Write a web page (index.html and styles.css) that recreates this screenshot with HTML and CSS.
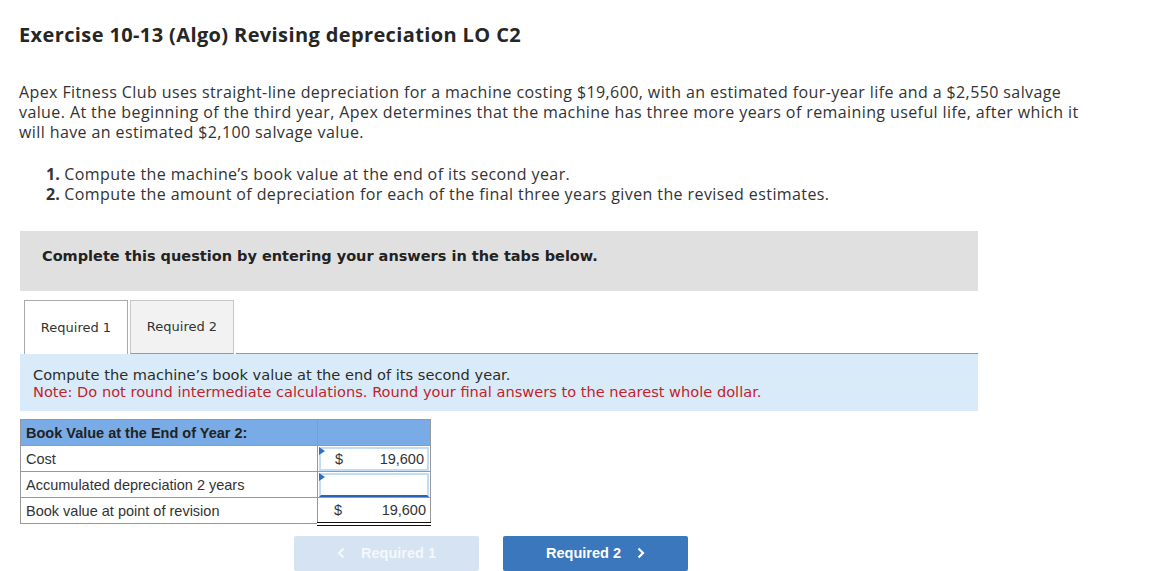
FILE: index.html
```
<!DOCTYPE html>
<html>
<head>
<meta charset="utf-8">
<link rel="stylesheet" href="styles.css">
</head>
<body>
<div class="page">
  <h1 class="title">Exercise 10-13 (Algo) Revising depreciation LO C2</h1>
  <p class="intro">Apex Fitness Club uses straight-line depreciation for a machine costing $19,600, with an estimated four-year life and a $2,550 salvage<br>value. At the beginning of the third year, Apex determines that the machine has three more years of remaining useful life, after which it<br>will have an estimated $2,100 salvage value.</p>
  <ol class="tasks">
    <li><b>1.</b> Compute the machine’s book value at the end of its second year.</li>
    <li><b>2.</b> Compute the amount of depreciation for each of the final three years given the revised estimates.</li>
  </ol>
  <div class="banner">Complete this question by entering your answers in the tabs below.</div>
  <div class="tabs">
    <div class="tab active">Required 1</div>
    <div class="tab">Required 2</div>
    <div class="tab-rest"></div>
  </div>
  <div class="prompt">
    <div>Compute the machine’s book value at the end of its second year.</div>
    <div class="note">Note: Do not round intermediate calculations. Round your final answers to the nearest whole dollar.</div>
  </div>
  <table class="grid">
    <tr class="head"><th>Book Value at the End of Year 2:</th><th class="val"></th></tr>
    <tr><td>Cost</td><td class="val"><div class="input"><span class="flag"></span><span>$</span><span>19,600</span></div></td></tr>
    <tr><td>Accumulated depreciation 2 years</td><td class="val"><div class="input focus"><span class="flag"></span></div></td></tr>
    <tr><td>Book value at point of revision</td><td class="val total"><div class="out"><span>$</span><span>19,600</span></div></td></tr>
  </table>
  <div class="nav">
    <div class="btn disabled"><svg class="chev" width="8" height="12" viewBox="0 0 8 12"><path d="M6.5 1.5 L2 6 L6.5 10.5" fill="none" stroke="currentColor" stroke-width="2.2"/></svg><span>Required 1</span></div>
    <div class="btn primary"><span>Required 2</span><svg class="chev" width="8" height="12" viewBox="0 0 8 12"><path d="M1.5 1.5 L6 6 L1.5 10.5" fill="none" stroke="currentColor" stroke-width="2.2"/></svg></div>
  </div>
</div>
</body>
</html>
```
FILE: styles.css
```
* { box-sizing: border-box; }
body { margin: 0; background: #fff; color: #2b2b2b; }
.page { padding: 21px 0 0 19px; font-family: "Open Sans", Lato, sans-serif; }
.title { margin: 0; font-size: 20px; line-height: 28px; font-weight: 700; letter-spacing: 0.38px; color: #262626; }
.intro { margin: 33px 0 0; font-size: 16px; line-height: 20px; letter-spacing: 0.4px; white-space: nowrap; color: #333; }
.tasks { list-style: none; margin: 22px 0 0; padding: 0 0 0 27px; font-size: 16px; line-height: 20px; letter-spacing: 0.4px; color: #333; }
.tasks b { font-weight: 700; letter-spacing: 0; }
.banner { margin: 27px 0 0 1px; width: 958px; height: 60px; background: #e0e0e0; padding: 15px 22px 0; font-family: "DejaVu Sans", Verdana, sans-serif; font-weight: 700; font-size: 14.5px; line-height: 20px; color: #222; }
.tabs { display: flex; margin: 9px 0 0 1px; width: 958px; height: 54px; padding-left: 4px; font-family: "DejaVu Sans", Verdana, sans-serif; font-size: 13px; color: #333; }
.tab { width: 104px; border: 1px solid #c8c8c8; background: #f2f2f2; border-bottom: 1px solid #999; display: flex; align-items: center; justify-content: center; margin-right: 2px; padding-bottom: 1px; }
.tab.active { width: 104px; background: #fff; border-color: #aaa; border-bottom: none; }
.tab-rest { flex: 1; border-bottom: 1px solid #999; }
.prompt { margin-left: 1px; width: 958px; height: 57px; background: #d9ebf9; padding: 12px 13px 0; font-family: "DejaVu Sans", Verdana, sans-serif; font-size: 14.6px; line-height: 17px; color: #2b2b2b; }
.note { color: #c4222b; }
.grid { margin: 8px 0 0 1px; border-collapse: collapse; font-family: "Liberation Sans", Arial, sans-serif; font-size: 14.5px; color: #333; }
.grid th, .grid td { border: 1px solid #999; height: 26px; padding: 0 5px; text-align: left; }
.grid th { font-weight: 700; background: #79ace6; color: #222; }
.grid td:first-child, .grid th:first-child { width: 297px; }
.grid .val { width: 113px; padding: 0; }
.input { position: relative; height: 24px; margin: 0 1px; border: 2px solid #c2dbf6; display: flex; align-items: center; justify-content: space-between; padding: 0 3px 0 14px; }
.input.focus { border-bottom-color: #2b64b5; }
.flag { position: absolute; left: -2px; top: -2px; width: 0; height: 0; border-top: 4px solid transparent; border-bottom: 4px solid transparent; border-left: 6px solid #2f6fc4; }
.total { border-bottom: 4px double #111 !important; }
.out { display: flex; justify-content: space-between; padding: 0 4px 0 16px; }
.nav { display: flex; gap: 24px; margin: 10px 0 0 275px; font-family: "Liberation Sans", Arial, sans-serif; font-weight: 700; font-size: 14.5px; }
.btn { width: 185px; height: 35px; border-radius: 2px; display: flex; align-items: center; justify-content: center; gap: 16px; color: #fff; }
.btn.disabled { background: #d5e3f2; color: #f4f8fc; }
.btn.primary { background: #3a77bd; }
.chev { display: block; }
```
